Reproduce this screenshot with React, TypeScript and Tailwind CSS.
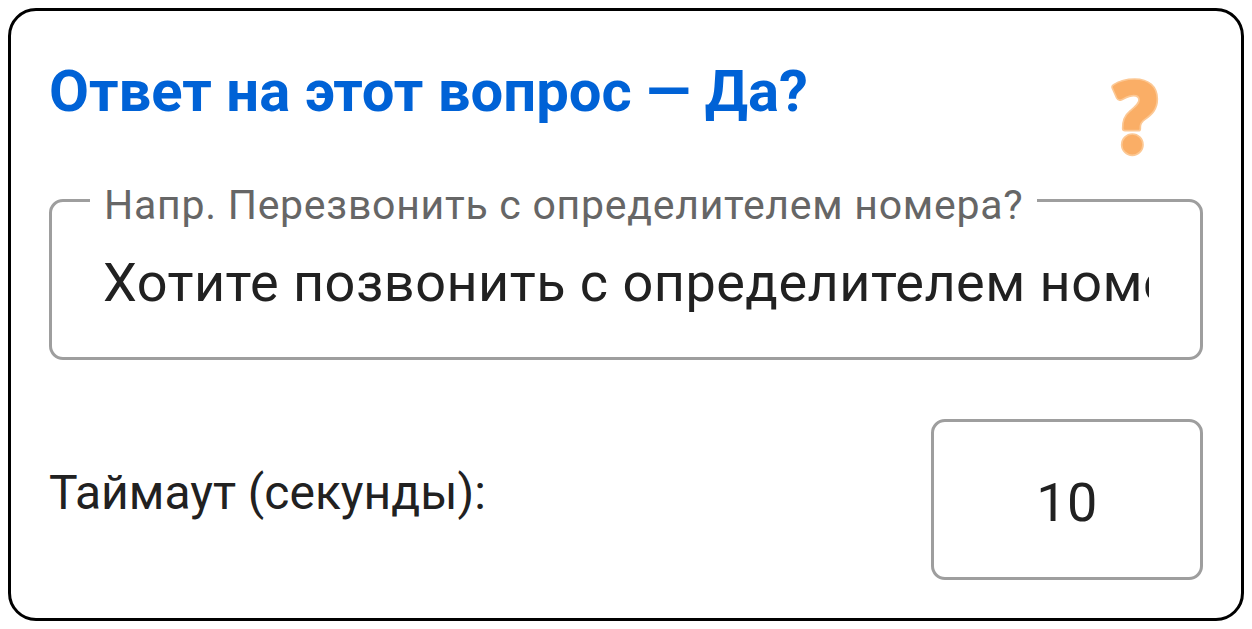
import React, { useState } from "react";

function QuestionIcon() {
  return (
    <svg viewBox="60 52 150 240" className="h-20 w-[50px]" aria-hidden="true">
      <g fill="#faae66" stroke="#fcc894" strokeWidth="5">
        <path d="M68 88Q63 79 71 75C89 63 112 58 134 58C177 58 202 81 202 118C202 149 186 164 165 179C155 186 151 191 151 202V207Q151 213 145 213H105Q98 213 98 206C98 184 102 169 121 153C137 140 147 132 147 121C147 112 141 108 131 108C119 108 108 114 95 120Q85 125 80 115Z" />
        <circle cx="127" cy="255" r="32" />
      </g>
    </svg>
  );
}

export default function App() {
  const [question, setQuestion] = useState("Хотите позвонить с определителем номера?");
  const [timeout, setTimeoutValue] = useState("10");

  return (
    <div className="bg-white p-2 font-['Roboto','Noto_Sans',sans-serif] text-[#212121]">
      <section className="rounded-[28px] border-3 border-black px-[38px] pt-12 pb-[38px]">
        <div className="flex items-start justify-between pr-[43px]">
          <h2 className="text-[58px] leading-[64px] font-bold text-[#0062d6]">
            Ответ на этот вопрос — Да?
          </h2>
          <div className="pt-[18px]">
            <QuestionIcon />
          </div>
        </div>

        <fieldset className="mt-[18px] min-w-0 rounded-[14px] border-3 border-[#9e9e9e] px-[38px]">
          <legend className="px-3.5 pt-2.5 text-[41px] leading-[40px] tracking-[0.018em] text-[#666666]">
            <label htmlFor="question">Напр. Перезвонить с определителем номера?</label>
          </legend>
          <input
            id="question"
            type="text"
            value={question}
            onChange={(e) => setQuestion(e.target.value)}
            className="block h-[132px] w-full px-[13px] pb-[18px] text-[54px] tracking-[0.009em] outline-none"
          />
        </fieldset>

        <div className="mt-[59px] flex items-center justify-between">
          <label htmlFor="timeout" className="pb-3.5 text-[48px] leading-[56px]">
            Таймаут (секунды):
          </label>
          <input
            id="timeout"
            type="text"
            inputMode="numeric"
            value={timeout}
            onChange={(e) => setTimeoutValue(e.target.value)}
            className="h-[161px] w-[272px] rounded-[14px] border-3 border-[#9e9e9e] pt-1.5 text-center text-[54px] tracking-[0.009em] outline-none"
          />
        </div>
      </section>
    </div>
  );
}
